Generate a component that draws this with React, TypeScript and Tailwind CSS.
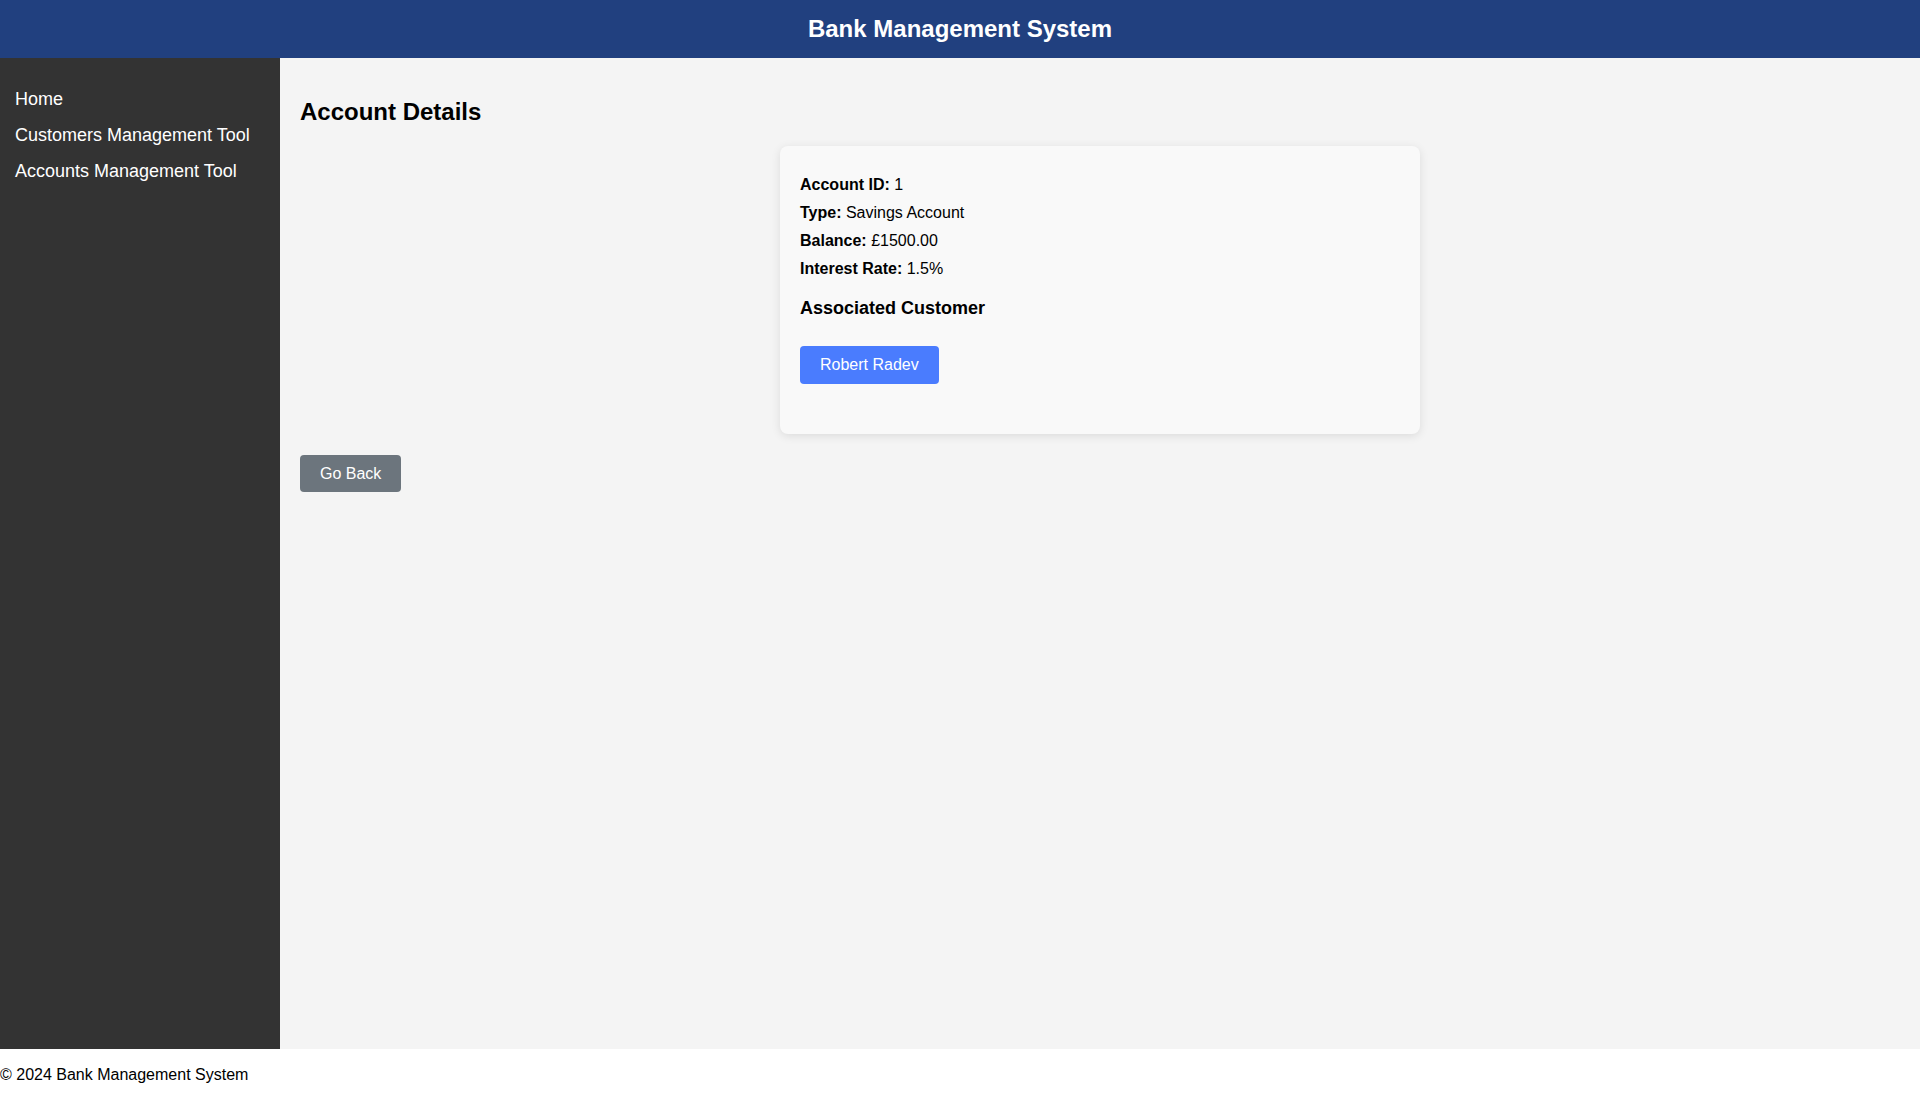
export default function App() {
  return (
    <div
      className="flex h-[1100px] flex-col bg-white text-black"
      style={{ fontFamily: '"Liberation Sans", Arial, sans-serif' }}
    >
      <header className="flex h-[58px] shrink-0 items-center justify-center bg-[#21407f]">
        <h1 className="text-[24px] leading-[28px] font-bold text-white">
          Bank Management System
        </h1>
      </header>

      <div className="flex min-h-0 flex-1">
        <nav className="w-[280px] shrink-0 bg-[#333333] px-[15px] pt-[31px]">
          <ul className="flex flex-col gap-[15px] text-[18px] leading-[21px] text-white">
            <li>Home</li>
            <li>Customers Management Tool</li>
            <li>Accounts Management Tool</li>
          </ul>
        </nav>

        <main className="flex-1 bg-[#f4f4f4] p-[20px]">
          <h2 className="mt-[20px] mb-[20px] text-[24px] leading-[28px] font-bold">
            Account Details
          </h2>

          <div className="mx-auto w-[640px] rounded-[8px] bg-[#f9f9f9] px-[20px] pt-[20px] pb-[50px] shadow-[0_2px_10px_rgba(0,0,0,0.1)]">
            <p className="mt-[10px] text-[16px] leading-[18px]">
              <b>Account ID:</b> 1
            </p>
            <p className="mt-[10px] text-[16px] leading-[18px]">
              <b>Type:</b> Savings Account
            </p>
            <p className="mt-[10px] text-[16px] leading-[18px]">
              <b>Balance:</b> £1500.00
            </p>
            <p className="mt-[10px] text-[16px] leading-[18px]">
              <b>Interest Rate:</b> 1.5%
            </p>
            <h3 className="mt-[19px] text-[18px] leading-[22px] font-bold">
              Associated Customer
            </h3>
            <div className="mt-[27px]">
              <button className="h-[38px] rounded-[4px] bg-[#4a7cfe] px-[20px] text-[16px] leading-[18px] text-white">
                Robert Radev
              </button>
            </div>
          </div>

          <button className="mt-[21px] h-[37px] rounded-[4px] bg-[#6c757d] px-[20px] text-[16px] leading-[17px] text-white">
            Go Back
          </button>
        </main>
      </div>

      <footer className="flex h-[51px] shrink-0 items-center bg-white text-[16px]">
        <p>© 2024 Bank Management System</p>
      </footer>
    </div>
  );
}
